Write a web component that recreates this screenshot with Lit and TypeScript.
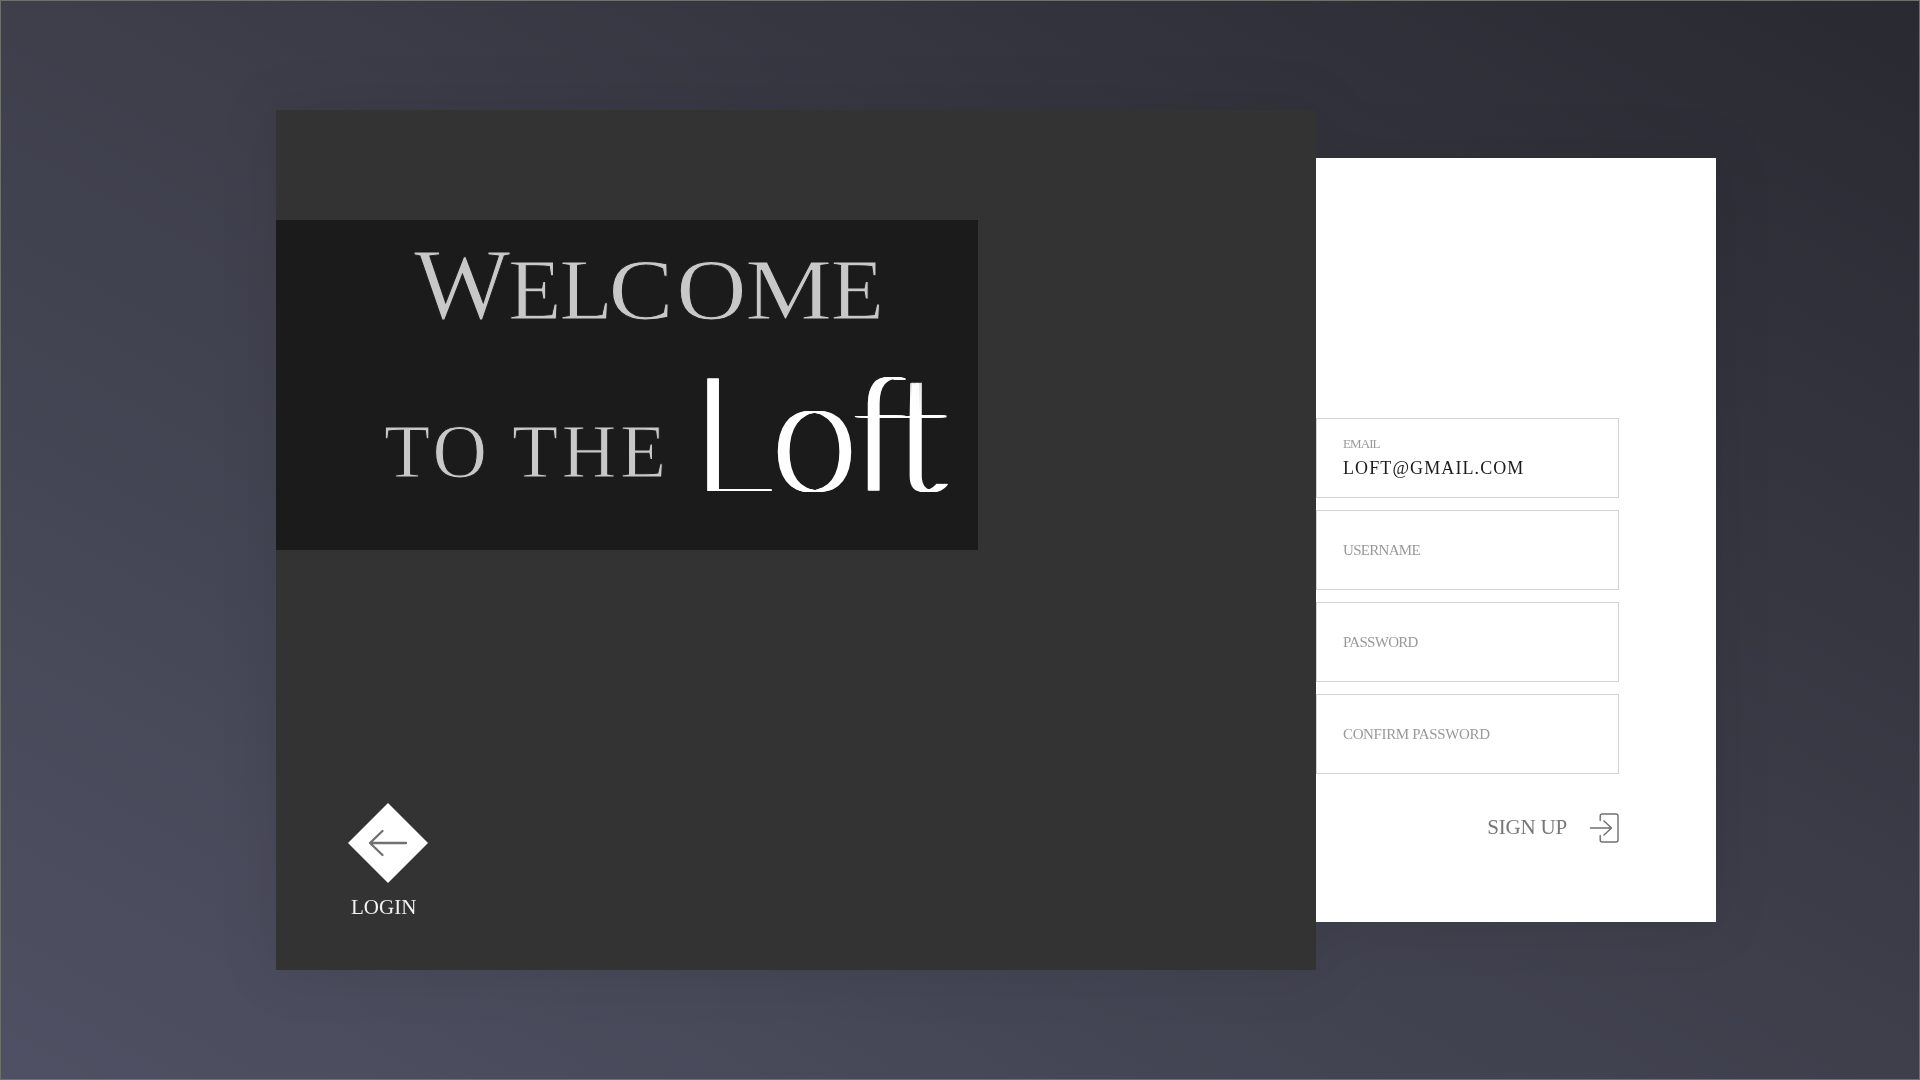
import { LitElement, html, css } from "lit";
import { customElement, property } from "lit/decorators.js";

@customElement("form-field")
class FormField extends LitElement {
  @property() label = "";
  @property() value = "";

  static styles = css`
    :host {
      display: flex;
      flex-direction: column;
      justify-content: center;
      box-sizing: border-box;
      height: 80px;
      padding-left: 26px;
      border: 1px solid #d4d4d4;
      font-family: "Liberation Serif", serif;
      text-transform: uppercase;
      white-space: nowrap;
    }
    .label { font-size: 15px; line-height: 18px; letter-spacing: -0.7px; color: #999; padding-bottom: 1px; }
    .label.long { letter-spacing: -0.36px; }
    .label.small { font-size: 13px; line-height: 16px; letter-spacing: -0.9px; padding: 0; margin-top: -1px; }
    .value { font-size: 18px; line-height: 22px; letter-spacing: 1.1px; color: #1c1c1c; margin-top: 5px; }
  `;

  render() {
    if (this.value) {
      return html`<div class="label small">${this.label}</div><div class="value">${this.value}</div>`;
    }
    return html`<div class="label ${this.label.length > 10 ? "long" : ""}">${this.label}</div>`;
  }
}

@customElement("app-root")
class AppRoot extends LitElement {
  static styles = css`
    :host { display: block; }
    .page {
      box-sizing: border-box;
      width: 1920px;
      height: 1080px;
      border: 1px solid #6e706e;
      background: linear-gradient(to top right, #4f5063 0%, #3e3f4b 50%, #292931 100%);
      display: flex;
      align-items: center;
      padding-left: 275px;
      font-family: "Liberation Serif", serif;
      overflow: hidden;
    }
    .panels { display: flex; align-items: center; filter: drop-shadow(0 0 28px rgba(0, 0, 0, 0.09)); }
    .hero {
      box-sizing: border-box;
      width: 1040px;
      height: 860px;
      padding-top: 110px;
      background: #333;
      display: flex;
      flex-direction: column;
      flex: none;
    }
    .banner {
      box-sizing: border-box;
      width: 702px;
      height: 330px;
      background: #1b1b1b;
      color: #c8c8c8;
      margin: 0;
      font-weight: 400;
      white-space: nowrap;
    }
    .line1 { display: flex; align-items: baseline; height: 129px; padding: 6px 0 0 138px; box-sizing: border-box; line-height: 117px; }
    .cap { font-size: 102px; letter-spacing: -2px; }
    .rest { font-size: 87px; }
    .cap, .rest, .to { -webkit-text-stroke: 1px #1b1b1b; }
    .tight { letter-spacing: -2px; }
    .wide { display: inline-block; transform: scaleX(1.12); }
    .c { margin-left: 1px; margin-right: 10px; }
    .o { margin-right: 8px; }
    .m { margin-right: 3px; }
    .line2 { display: flex; align-items: baseline; line-height: 160px; padding-left: 108px; }
    .to { font-size: 75.5px; letter-spacing: 3.7px; width: 306px; position: relative; top: -14px; }
    .brand {
      font-family: Lato, sans-serif;
      font-weight: 100;
      font-size: 161px;
      color: #fff;
      font-variant-ligatures: none;
      transform: scaleX(0.92);
      transform-origin: left;
      text-shadow: 1px 0, 2px 0, 3px 0, 4px 0, 5px 0, 6px 0, 7px 0, 8px 0, 9px 0, 10px 0, 11px 0;
    }
    .brand-l { letter-spacing: 5px; }
    .brand-f { letter-spacing: -8px; }
    .login { width: 80px; margin: 253px 0 0 72px; }
    .login svg { display: block; }
    .login-text { font-size: 21px; line-height: 24px; letter-spacing: 0; color: #f2f2f2; margin: 12px 0 0 3px; }
    .signup {
      box-sizing: border-box;
      width: 400px;
      height: 764px;
      padding-top: 260px;
      padding-right: 97px;
      background: #fff;
      flex: none;
    }
    .fields { display: grid; gap: 12px; }
    .submit { display: flex; justify-content: flex-end; align-items: center; margin-top: 37px; height: 32px; font-size: 21px; letter-spacing: -0.2px; color: #777; gap: 22px; }
    .submit svg { display: block; margin-top: 1px; }
  `;

  render() {
    return html`
      <main class="page">
        <div class="panels">
          <section class="hero">
            <h1 class="banner">
              <div class="line1"><span class="cap">W</span><span class="rest"><span class="tight">EL</span><span class="wide c">C</span><span class="wide o">O</span><span class="wide m">M</span>E</span></div>
              <div class="line2"><span class="to">TO THE</span><span class="brand"><span class="brand-l">L</span>o<span class="brand-f">f</span>t</span></div>
            </h1>
            <div class="login">
              <svg width="80" height="80" viewBox="0 0 80 80">
                <path d="M40 0L80 40L40 80L0 40Z" fill="#fff" />
                <path d="M58 40H22M34.5 28L22 40L34.5 52" fill="none" stroke="#707070" stroke-width="2.3" stroke-linecap="round" stroke-linejoin="round" />
              </svg>
              <div class="login-text">LOGIN</div>
            </div>
          </section>
          <section class="signup">
            <div class="fields">
              <form-field label="Email" value="loft@gmail.com"></form-field>
              <form-field label="Username"></form-field>
              <form-field label="Password"></form-field>
              <form-field label="Confirm password"></form-field>
            </div>
            <div class="submit">
              <span>SIGN UP</span>
              <svg width="30" height="30" viewBox="0 0 30 30" fill="none" stroke="#707070" stroke-width="1.4" stroke-linecap="round" stroke-linejoin="round">
                <path d="M1.5 15H22.5M15 8L22.5 15L15 22M11.2 7.5V3Q11.2 1 13.2 1H27Q29 1 29 3V27Q29 29 27 29H13.2Q11.2 29 11.2 27V22.5" />
              </svg>
            </div>
          </section>
        </div>
      </main>
    `;
  }
}
